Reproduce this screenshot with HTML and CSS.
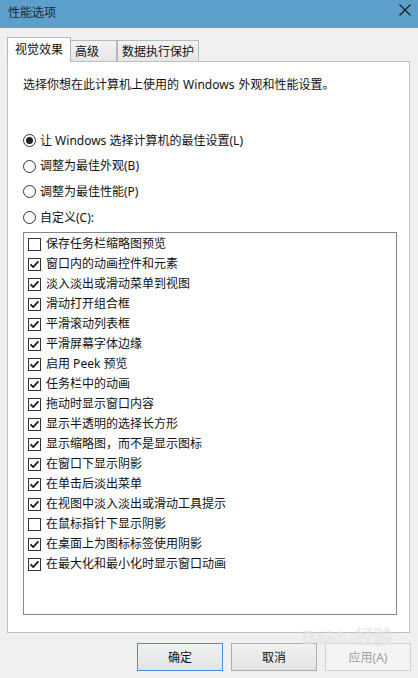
FILE: index.html
```html
<!DOCTYPE html>
<html lang="zh-CN">
<head>
  <meta charset="UTF-8">
  <meta name="viewport" content="width=device-width, initial-scale=1">
  <title>性能选项</title>
  <link rel="stylesheet" href="styles.css">
</head>
<body>
  <div class="window">
    <div class="titlebar">
      <span class="title">性能选项</span>
      <svg class="close" width="12" height="12" viewBox="0 0 12 12">
        <path d="M0.5 0.5 L11.5 11.5 M11.5 0.5 L0.5 11.5" stroke="#1a1a1a" stroke-width="1.1" fill="none"/>
      </svg>
    </div>

    <div class="tabs">
      <div class="tab active">视觉效果</div>
      <div class="tab tab-adv">高级</div>
      <div class="tab tab-dep">数据执行保护</div>
    </div>

    <div class="panel">
      <p class="desc">选择你想在此计算机上使用的 Windows 外观和性能设置。</p>

      <div class="radios">
        <div class="radio-row"><span class="radio checked"></span>让 Windows 选择计算机的最佳设置(L)</div>
        <div class="radio-row"><span class="radio"></span>调整为最佳外观(B)</div>
        <div class="radio-row"><span class="radio"></span>调整为最佳性能(P)</div>
        <div class="radio-row"><span class="radio"></span>自定义(C):</div>
      </div>

      <div class="list">
        <div class="item"><span class="box"></span>保存任务栏缩略图预览</div>
        <div class="item"><span class="box on"></span>窗口内的动画控件和元素</div>
        <div class="item"><span class="box on"></span>淡入淡出或滑动菜单到视图</div>
        <div class="item"><span class="box on"></span>滑动打开组合框</div>
        <div class="item"><span class="box on"></span>平滑滚动列表框</div>
        <div class="item"><span class="box on"></span>平滑屏幕字体边缘</div>
        <div class="item"><span class="box on"></span>启用 Peek 预览</div>
        <div class="item"><span class="box on"></span>任务栏中的动画</div>
        <div class="item"><span class="box on"></span>拖动时显示窗口内容</div>
        <div class="item"><span class="box on"></span>显示半透明的选择长方形</div>
        <div class="item"><span class="box on"></span>显示缩略图，而不是显示图标</div>
        <div class="item"><span class="box on"></span>在窗口下显示阴影</div>
        <div class="item"><span class="box on"></span>在单击后淡出菜单</div>
        <div class="item"><span class="box on"></span>在视图中淡入淡出或滑动工具提示</div>
        <div class="item"><span class="box"></span>在鼠标指针下显示阴影</div>
        <div class="item"><span class="box on"></span>在桌面上为图标标签使用阴影</div>
        <div class="item"><span class="box on"></span>在最大化和最小化时显示窗口动画</div>
      </div>
    </div>

    <div class="buttons">
      <button class="btn default">确定</button>
      <button class="btn">取消</button>
      <button class="btn" disabled>应用(A)</button>
    </div>

    <!-- watermark over the corner -->
    <div class="mark">Bai<b>du</b>经验</div>
  </div>
</body>
</html>
```

FILE: styles.css
```css
* {
  margin: 0;
  padding: 0;
  box-sizing: border-box;
}

body {
  font-family: "Noto Sans", "Noto Sans CJK SC", sans-serif;
  font-size: 12px;
  color: #111;
  background: #f0f0f0;
}

.window {
  position: relative;
  width: 418px;
  height: 678px;
  overflow: hidden;
  background: #f0f0f0;
}

.titlebar {
  height: 28px;
  background: #5c9fcb;
  display: flex;
  align-items: center;
  justify-content: space-between;
  padding: 0 8px 2px 8px;
}

.title {
  line-height: 16px;
  color: #1e2a33;
}

.close {
  margin-top: -6px;
  margin-right: -1px;
}

/* tab strip */
.tabs {
  display: flex;
  align-items: flex-end;
  margin-top: 9px;
  padding-left: 7px;
  height: 24px;
}

.tab {
  height: 21px;
  border: 1px solid #b8b8b8;
  border-bottom: none;
  background: linear-gradient(#f3f3f3, #e6e6e6);
  line-height: 16px;
  padding: 3px 0 0 4px;
  white-space: nowrap;
}

.tab.active {
  position: relative;
  z-index: 1;
  width: 64px;
  height: 25px;
  margin-bottom: -1px;
  background: #fff;
  padding: 4px 0 0 7px;
}

.tab-adv {
  width: 46px;
  border-left: none;
}

.tab-dep {
  width: 82px;
}

.panel {
  margin-left: 7px;
  width: 403px;
  height: 572px;
  background: #fff;
  border: 1px solid #bfbfbf;
  padding: 15px 12px 0 15px;
}

.desc {
  line-height: 16px;
  word-spacing: 1px;
}

.radios {
  margin-top: 35px;
}

.radio-row {
  height: 25.6px;
  display: flex;
  align-items: center;
  line-height: 16px;
}

.radio {
  width: 13px;
  height: 13px;
  border: 1px solid #333;
  border-radius: 50%;
  margin-right: 4px;
  display: flex;
  align-items: center;
  justify-content: center;
}

.radio.checked::after {
  content: "";
  width: 7px;
  height: 7px;
  border-radius: 50%;
  background: #222;
}

/* checkbox list */
.list {
  margin-top: 2px;
  width: 374px;
  height: 383px;
  border: 1px solid #828790;
  padding: 1px 0 0 4px;
}

.item {
  height: 20px;
  display: flex;
  align-items: center;
  line-height: 16px;
}

.box {
  width: 13px;
  height: 13px;
  border: 1px solid #333;
  background: #fff;
  margin-right: 5px;
  flex-shrink: 0;
}

.box.on {
  background: #fff url("data:image/svg+xml,%3Csvg xmlns='http://www.w3.org/2000/svg' width='11' height='11' viewBox='0 0 11 11'%3E%3Cpath d='M1.6 5.4 L4.2 8 L9.4 2.4' stroke='%23111' stroke-width='1.7' fill='none'/%3E%3C/svg%3E") no-repeat center;
}

.buttons {
  display: flex;
  justify-content: flex-end;
  gap: 8px;
  margin-top: 10px;
  padding-right: 7px;
}

.btn {
  width: 86px;
  height: 28px;
  font: inherit;
  color: #111;
  background: linear-gradient(#f2f2f2, #e3e3e3);
  border: 1px solid #adadad;
}

.btn.default {
  border-color: #3d92e4;
}

.btn:disabled {
  color: #a0a0a0;
  border-color: #d0d0d0;
  background: #f4f4f4;
}

.mark {
  position: absolute;
  left: 302px;
  top: 628px;
  font-family: "Liberation Sans", "Noto Sans CJK SC", sans-serif;
  font-size: 19px;
  font-weight: bold;
  line-height: 20px;
  color: #e4e4e4;
  text-shadow: 0 0 1px #cfcfcf;
  opacity: 0.6;
  pointer-events: none;
}

.mark b {
  color: #ebebeb;
}
```
